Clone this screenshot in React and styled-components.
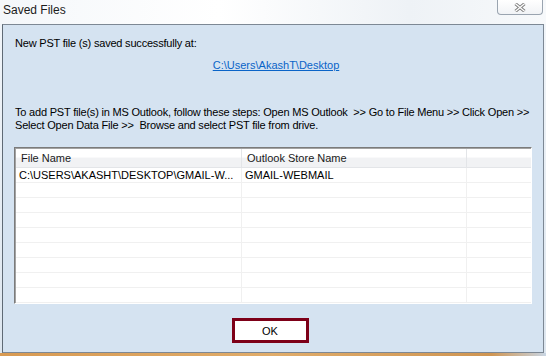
import React from "react";
import styled, { createGlobalStyle } from "styled-components";

const GlobalStyle = createGlobalStyle`
  html, body {
    margin: 0;
    padding: 0;
    background: #dfe7ef;
  }
  body {
    font-family: "Liberation Sans", Arial, sans-serif;
  }
`;

const rows = [
  { file: "C:\\USERS\\AKASHT\\DESKTOP\\GMAIL-W...", store: "GMAIL-WEBMAIL" },
  ...Array.from({ length: 10 }, () => ({ file: "", store: "" })),
];

const CloseGlyph = () => (
  <svg width="12" height="9" viewBox="0 0 12 9">
    <path d="M1.5 0.8 L10.5 8.2 M10.5 0.8 L1.5 8.2" stroke="#7c7c7c" strokeWidth="3.2" />
    <path d="M1.5 0.8 L10.5 8.2 M10.5 0.8 L1.5 8.2" stroke="#ffffff" strokeWidth="1.3" />
  </svg>
);

const App = () => {
  return (
    <>
      <GlobalStyle />
      <Window>
        <TitleBar>
          <Title>Saved Files</Title>
          <CloseButton>
            <CloseGlyph />
          </CloseButton>
        </TitleBar>
        <Client>
          <Message>New PST file (s) saved successfully at:</Message>
          <PathRow>
            <PathLink href="#">C:\Users\AkashT\Desktop</PathLink>
          </PathRow>
          <Steps>
            To add PST file(s) in MS Outlook, follow these steps: Open MS Outlook&nbsp; &gt;&gt; Go to File Menu &gt;&gt; Click Open &gt;&gt;
            <br />
            Select Open Data File &gt;&gt;&nbsp; Browse and select PST file from drive.
          </Steps>
          <ListView>
            <HeaderRow>
              <HeaderCell>File Name</HeaderCell>
              <HeaderCell>Outlook Store Name</HeaderCell>
              <HeaderCell last />
            </HeaderRow>
            {rows.map((r, i) => (
              <Row key={i}>
                <Cell>{r.file}</Cell>
                <Cell>{r.store}</Cell>
                <Cell last />
              </Row>
            ))}
          </ListView>
          <Footer>
            <OkButton>OK</OkButton>
          </Footer>
        </Client>
        <DesktopEdge />
      </Window>
    </>
  );
};

const Window = styled.div`
  width: 546px;
  height: 356px;
  display: flex;
  flex-direction: column;
  overflow: hidden;
  background: linear-gradient(to bottom, #f8fafc 0px, #f1f5f9 24px, #dde6ef 100%);
`;

const TitleBar = styled.div`
  height: 24px;
  flex: none;
  display: flex;
  justify-content: space-between;
  align-items: flex-start;
  background: linear-gradient(to right, #f4f7fa 0%, #ffffff 40%, #eef2f6 75%, #f7f9fb 100%);
`;

const Title = styled.div`
  padding: 3px 0 0 3px;
  font-size: 12px;
  line-height: 15px;
  color: #1b1b1b;
  text-shadow: 0 0 6px #ffffff;
`;

const CloseButton = styled.div`
  width: 44px;
  height: 14px;
  margin-right: 3px;
  display: flex;
  align-items: center;
  justify-content: center;
  border: 1px solid #9aa4b0;
  border-top: none;
  border-radius: 0 0 4px 4px;
  background: linear-gradient(to bottom, #ffffff, #f1f3f6);
`;

const Client = styled.div`
  flex: 1;
  margin: 0 2px;
  padding: 12px 11px 0 11px;
  display: flex;
  flex-direction: column;
  background: #d5e3f1;
  border: 1px solid #7d8894;
  border-left-color: #5f6a75;
  font-size: 11px;
  line-height: 13px;
  letter-spacing: -0.2px;
  color: #000;
`;

const Message = styled.div`
  padding-left: 1px;
`;

const PathRow = styled.div`
  margin-top: 9px;
  display: flex;
  justify-content: center;
  padding-left: 6px;
`;

const PathLink = styled.a`
  color: #0a64c8;
  letter-spacing: 0;
  text-decoration: underline;
`;

const Steps = styled.div`
  margin-top: 34px;
  padding-left: 1px;
  white-space: nowrap;
`;

const ListView = styled.div`
  margin-top: 15px;
  height: 157px;
  box-sizing: border-box;
  overflow: hidden;
  background: #ffffff;
  border: 1px solid;
  border-color: #7b7b7b #ffffff #ffffff #7b7b7b;
  box-shadow: inset 1px 1px 0 #a3a3a3;
  padding: 1px 0 0 1px;
  letter-spacing: 0;
`;

const columns = "226px 225px 1fr";

const HeaderRow = styled.div`
  display: grid;
  grid-template-columns: ${columns};
  height: 18px;
  border-bottom: 1px solid #e3e5e8;
  background: linear-gradient(to bottom, #ffffff 0%, #ffffff 45%, #f1f2f4 50%, #f1f2f4 100%);
`;

const HeaderCell = styled.div`
  padding-left: 5px;
  line-height: 18px;
  color: #1a1a1a;
  border-right: ${(p) => (p.last ? "none" : "1px solid #e3e5e8")};
  white-space: nowrap;
  overflow: hidden;
`;

const Row = styled.div`
  display: grid;
  grid-template-columns: ${columns};
  height: 14px;
  border-bottom: 1px solid #f0f0f0;
  &:first-of-type {
    margin-top: 1px;
  }
`;

const Cell = styled.div`
  padding-left: 3px;
  line-height: 14px;
  color: #000;
  border-right: ${(p) => (p.last ? "none" : "1px solid #f0f0f0")};
  white-space: nowrap;
  overflow: hidden;
`;

const Footer = styled.div`
  margin-top: 14px;
  display: flex;
  justify-content: center;
  padding-right: 6px;
`;

const OkButton = styled.button`
  width: 77px;
  height: 25px;
  box-sizing: border-box;
  border: 3px solid #7d0018;
  background: #ffffff;
  font-family: "Liberation Sans", Arial, sans-serif;
  font-size: 11px;
  color: #000;
  padding: 0;
  cursor: pointer;
`;

const DesktopEdge = styled.div`
  height: 3px;
  flex: none;
  background: linear-gradient(to right, #d89a52 0%, #e0ac6a 50%, #cf9552 90%, #c9d6e4 100%);
`;

export default App;
